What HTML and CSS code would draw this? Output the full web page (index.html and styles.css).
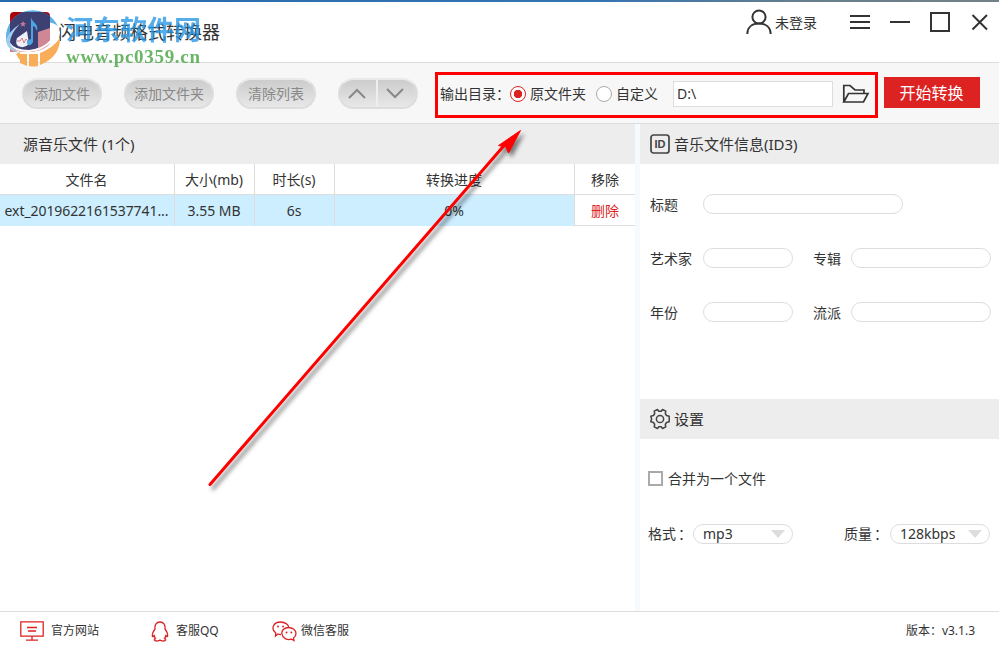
FILE: index.html
```html
<!DOCTYPE html>
<html lang="zh-CN">
<head>
<meta charset="utf-8">
<title>闪电音频格式转换器</title>
<link rel="stylesheet" href="styles.css">
</head>
<body>
<div class="app">
  <header class="titlebar">
    <div class="brand">
      <svg class="logo" width="58" height="60" viewBox="5 9 58 60">
        <defs>
          <linearGradient id="lg" x1="0" y1="0" x2="0" y2="1"><stop offset="0" stop-color="#a80007"/><stop offset="1" stop-color="#e23a30"/></linearGradient>
          <clipPath id="tile"><rect x="10" y="12" width="40" height="40" rx="4"/></clipPath>
        </defs>
        <rect x="10" y="12" width="40" height="40" rx="4" fill="url(#lg)"/>
        <path d="M6 38A27 27 0 0 1 58 27Q54 21 43 23Q22 27 9 45Q6 42 6 38Z" fill="#5fb0e6"/>
        <path d="M6 38A27 27 0 0 1 58 27L50 52H10Z" fill="#3c4073" clip-path="url(#tile)"/>
        <path d="M38 32L50 28V52H38Z" fill="#cf8795"/>
        <path d="M10 46Q22 54 38 48L50 42V52H10Z" fill="#d97d80"/>
        <path d="M50 27Q57 27 57 33Q54 43 43 49Q27 55 15 50Q22 58 38 54Q58 47 60 33Q59 24 50 23Z" fill="#fff"/>
        <path d="M9 43Q14 51 29 51Q43 50 52 40" fill="none" stroke="#fff" stroke-width="2"/>
        <path d="M16 54Q18 58 20 60V52ZM20 54H27V66L20 63ZM29 54H38V66Q34 67 29 66ZM40 53Q52 49 60 38Q60 57 40 65Z" fill="#f9ad59"/>
        <path d="M17 38L27 31L29 44Q24 49 18 46Q15 43 17 38Z" fill="#eef1f8"/>
        <path d="M17 41H20L22 38L24 43L26 39L28 41" fill="none" stroke="#d9788a"/>
        <path d="M31 17C32 23 39 23 37 31L35 27L33 26V42Q31 47 27 44Q26 40 31 39Z" fill="#4aa5e2"/>
        <path d="M23 21l1 2 2 .2-1.600 1.400.5 2.200-1.900-1.200-1.900 1.200.5-2.200L20 23.200l2-.2z" fill="#c67a96"/>
        <path d="M6 40Q9 31 20 24Q11 33 10 42Q11 49 20 53Q7 51 6 40Z" fill="#9fcdec"/>
      </svg>
      <h1>闪电音频格式转换器</h1>
      <div class="mark"><b class="mark-name">河东软件网</b><b class="mark-url">www.pc0359.cn</b></div>
    </div>
    <div class="controls">
      <svg width="27" height="26" viewBox="0 0 27 26" fill="none" stroke="#333" stroke-width="2"><circle cx="13" cy="8" r="6.600"/><path d="M1.300 25C1.300 18 6.500 14.600 13 14.600S24.700 18 24.700 25"/></svg>
      <span class="login">未登录</span>
      <svg class="win" width="140" height="22" viewBox="0 0 140 22" fill="none" stroke="#333" stroke-width="2"><path d="M0 5H20M0 11H20M0 17H20M40 11H60"/><rect x="81" y="2" width="18" height="18"/><path d="M122.500 4L137 18.500M137 4L122.500 18.500"/></svg>
    </div>
  </header>

  <section class="toolbar">
    <button class="pill add">添加文件</button>
    <button class="pill folder">添加文件夹</button>
    <button class="pill clear">清除列表</button>
    <div class="pill arrows">
      <span><svg width="20" height="14" viewBox="0 0 20 14"><path d="M2 11L10 3L18 11"/></svg></span>
      <span><svg width="20" height="14" viewBox="0 0 20 14"><path d="M2 2L10 10L18 2"/></svg></span>
    </div>
    <div class="output">
      <span class="out-label">输出目录：</span>
      <i class="radio on"></i><span class="src">原文件夹</span>
      <i class="radio"></i><span class="custom">自定义</span>
      <div class="path">D:\</div>
      <svg width="28" height="20" viewBox="0 0 28 20" fill="none" stroke="#333" stroke-width="1.700"><path d="M1.800 18V1.500H8L13 6H22V9.500M1.800 18L6.500 9.500H26L21.500 18Z"/></svg>
    </div>
    <button class="start">开始转换</button>
  </section>

  <main class="main">
    <section class="files">
      <h2 class="bar files-title">源音乐文件 (1个)</h2>
      <div class="row head"><span>文件名</span><span>大小(mb)</span><span>时长(s)</span><span>转换进度</span><span>移除</span></div>
      <div class="row item"><span class="name">ext_2019622161537741...</span><span>3.55 MB</span><span>6s</span><span>0%</span><span class="del">删除</span></div>
    </section>
    <aside class="side">
      <h2 class="bar">
        <svg width="20" height="20" viewBox="0 0 20 20"><rect x="1" y="1" width="18" height="18" rx="2.500" fill="none" stroke="#444" stroke-width="1.700"/><text x="10" y="14" text-anchor="middle" class="id">ID</text></svg>
        <span>音乐文件信息(ID3)</span>
      </h2>
      <div class="info">
        <label>标题</label><i class="field wide"></i>
        <label>艺术家</label><i class="field"></i><label class="second">专辑</label><i class="field last"></i>
        <label>年份</label><i class="field"></i><label class="second">流派</label><i class="field last"></i>
      </div>
      <h2 class="bar">
        <svg width="20" height="22" viewBox="0 0 20 22" fill="none" stroke="#444" stroke-width="1.500" stroke-linejoin="round"><path d="M7.500 1.500L8.800 3.200H11.200L12.500 1.500L15.800 3.200L15.300 5.500L16.500 7.500L19.200 8.300V13.700L16.500 14.500L15.300 16.500L15.800 18.800L12.500 20.500L11.200 18.800H8.800L7.500 20.500L4.200 18.800L4.700 16.500L3.500 14.500L.8 13.700L1.600 11L.8 8.300L3.500 7.500L4.700 5.500L4.200 3.200Z"/><circle cx="10" cy="11" r="3.600"/></svg>
        <span>设置</span>
      </h2>
      <div class="merge"><i class="check"></i>合并为一个文件</div>
      <div class="formats">
        <span class="fl">格式<span class="colon">：</span></span><div class="select">mp3<i></i></div>
        <span class="ql">质量<span class="colon">：</span></span><div class="select">128kbps<i></i></div>
      </div>
    </aside>
  </main>

  <footer class="footer">
    <a class="site"><svg width="24" height="20" viewBox="0 0 24 20"><path d="M.8 .8H23.200V15.200H.8ZM7 6.500H17M8 10H16M12 15V19M6 19.200H18"/></svg>官方网站</a>
    <a class="qq"><svg width="18" height="21" viewBox="0 0 18 21"><path d="M4 8C3.500 3.500 5.500 1 9 1S14.500 3.500 14 8C15.500 10 17.200 13 16.500 15.500C16 16 15.500 15 14.800 14.500C14.500 16 14 17 13.500 17.600C15.500 18.500 15 20 12.500 20C11 20 10 19.500 9 19.200C8 19.500 7 20 5.500 20C3 20 2.500 18.500 4.500 17.600C4 17 3.500 16 3.200 14.500C2.500 15 2 16 1.500 15.500C.8 13 2.500 10 4 8Z"/></svg>客服QQ</a>
    <a class="wx"><svg width="25" height="21" viewBox="0 0 25 21"><path d="M9 13.500Q7.500 13.600 6 13L3.500 15L3.800 12C-2 7.500 2 1 8.500 1C13 1 16.500 3.500 16.800 6.500M10 13C9 9 13 6.500 16.500 6.500C20.500 6.500 24 9 24 12.500C24 14.500 23 16 21.500 17L22 19.500L19.500 18.200C15 19.500 10.500 17 10 13Z"/><path class="dots" d="M6 5.500h.1M11 5.500h.1M14.500 11.500h.1M19.300 11.500h.1"/></svg>微信客服</a>
    <span class="version">版本：v3.1.3</span>
  </footer>

  <svg class="pointer" width="340" height="380" viewBox="0 0 340 380"><path d="M10 364.500L308 21" stroke="red" stroke-width="3" stroke-linecap="round"/><path d="M320.500 10.500L308.500 33L306 27L298.500 25.500Z" fill="red" stroke="red"/></svg>
</div>
</body>
</html>
```
FILE: styles.css
```css
* { box-sizing: border-box; }
body { margin: 0; }
body, button {
  font-family: "Noto Sans", "Noto Sans CJK SC", sans-serif;
  font-size: 14px;
  color: #333;
}
.app {
  position: relative;
  width: 999px;
  height: 650px;
  display: flex;
  flex-direction: column;
  background: #fff;
  overflow: hidden;
  line-height: 20px;
  white-space: nowrap;
}
svg { display: block; flex: none; }
h1, h2 { margin: 0; font-weight: 400; }
i { display: block; flex: none; }

.titlebar {
  height: 63px;
  display: flex;
  justify-content: space-between;
  border-bottom: 1px solid #ddd;
  background: linear-gradient(90deg, #2669ad 0%, #3574b2 60%, #667f8d 80%, #738087 100%) 0 0 / 100% 2px no-repeat;
}
.brand { position: relative; padding: 19px 0 0 58px; }
.brand h1 { font-size: 18px; line-height: 26px; }
.logo { position: absolute; left: 5px; top: 9px; }
.mark { position: absolute; left: 66px; top: 13px; z-index: 1; opacity: .78; }
.mark b { display: block; }
.mark-name { font-size: 27px; line-height: 33px; color: #2697e6; }
.mark-url { font: bold 19px/22px "Liberation Serif", serif; color: #41a23c; letter-spacing: .7px; }
.controls { display: flex; padding: 9px 9px 0 0; }
.login { margin: 4px 33px 0 2px; }
.win { margin-top: 2px; }

.toolbar {
  height: 61px;
  display: flex;
  background: #f7f7f7;
  border-bottom: 1px solid #ddd;
  padding: 9px 0 0 22px;
}
.pill {
  height: 31px;
  margin-top: 6px;
  border: 2px solid #ddd;
  border-top-color: #eaeaea;
  border-radius: 16px;
  background: linear-gradient(#ccc, #e8e8e8);
  color: #888;
  padding: 0 0 1px;
  flex: none;
}
.add { width: 80px; }
.folder { width: 90px; margin-left: 22px; }
.clear { width: 80px; margin-left: 22px; }
.arrows { width: 80px; margin-left: 22px; padding: 0; display: flex; }
.arrows span { flex: 1; display: flex; align-items: center; justify-content: center; padding-right: 2px; }
.arrows span + span { border-left: 2px solid #eee; padding-right: 4px; }
.arrows path { fill: none; stroke: #888; stroke-width: 2; }
.output {
  width: 443px;
  height: 46px;
  margin-left: 17px;
  border: 3px solid red;
  display: flex;
  align-items: center;
  padding: 0 4px 3px 2px;
}
.out-label { width: 70px; }
.radio { width: 16px; height: 16px; border: 1px solid #aaa; border-radius: 50%; background: #fff; }
.radio.on { border-color: #d22; background: radial-gradient(circle, #d22 0 4px, #fff 4.5px); }
.src { width: 70px; padding-left: 4px; flex: none; }
.src + .radio { margin-left: 0; }
.custom { width: 61px; padding-left: 4px; flex: none; }
.src + .radio { position: static; }
.path { width: 160px; height: 26px; flex: none; border: 1px solid #ddd; background: #fff; padding: 2px 3px; margin-right: 9px; }
.start { width: 96px; height: 31px; margin: 5px 0 0 6px; border: 0; background: #d22; color: #fff; font-size: 16px; padding: 0 1px 1px 0; }

.main { height: 487px; display: flex; }
.files { width: 635px; }
.bar { height: 40px; display: flex; align-items: center; background: #ededed; font-size: 15px; padding-left: 10px; gap: 4px; }
.files-title { padding-left: 23px; }
.row {
  height: 31px;
  display: grid;
  grid-template-columns: 175px 80px 80px 240px 60px;
  border-bottom: 1px solid #ddd;
  line-height: 31px;
  text-align: center;
}
.row span { border-right: 1px solid #ddd; padding-right: 1px; }
.row span:last-child { border-right: 0; padding-right: 0; }
.item span:not(.del) { background: #cef; }
.row .name { letter-spacing: -.08px; }
.row .del { color: #d22; }
.side { width: 364px; border-left: 5px solid #f5faff; }
.id { font: bold 11px "Liberation Sans", sans-serif; fill: #444; }
.info {
  height: 235px;
  padding: 30px 8px 0 10px;
  display: grid;
  grid-template-columns: 53px 90px 20px 38px 140px;
  grid-template-rows: 54px 54px 54px;
  align-items: start;
}
.info label { line-height: 22px; grid-column: 1; }
.info .field { grid-column: 2; }
.info .second { grid-column: 4; }
.info .last { grid-column: 5; }
.field { height: 20px; border: 1px solid #ddd; border-radius: 10px; }
.info .wide { width: 200px; }
.merge { display: flex; align-items: center; height: 20px; margin: 30px 0 0 8px; }
.check { width: 15px; height: 15px; border: 2px solid #aaa; margin: -1px 5px 0 0; }
.formats { display: flex; margin: 35px 0 0 8px; }
.fl { width: 45px; }
.ql { width: 46px; margin-left: 51px; }
.colon { margin-left: 2px; }
.select { width: 100px; height: 20px; border: 1px solid #ddd; border-radius: 10px; line-height: 18px; padding: 0 7px 0 9px; display: flex; justify-content: space-between; }
.select i { margin-top: 5px; border: 7px solid transparent; border-top: 8px solid #ddd; border-bottom: 0; height: 0; }

.footer { height: 39px; border-top: 1px solid #ddd; display: flex; align-items: center; padding: 0 24px 0 20px; font-size: 12px; }
.footer a { display: flex; align-items: center; gap: 7px; }
.footer svg { fill: none; stroke: #d22; stroke-width: 1.3; }
.site { width: 131px; }
.qq { width: 121px; }
.footer .wx { gap: 4px; }
.dots { stroke-width: 1.8; stroke-linecap: round; }
.version { margin-left: auto; }
.pointer { position: absolute; left: 200px; top: 120px; filter: drop-shadow(3px 4px 2px rgba(0,0,0,.5)); }
```
